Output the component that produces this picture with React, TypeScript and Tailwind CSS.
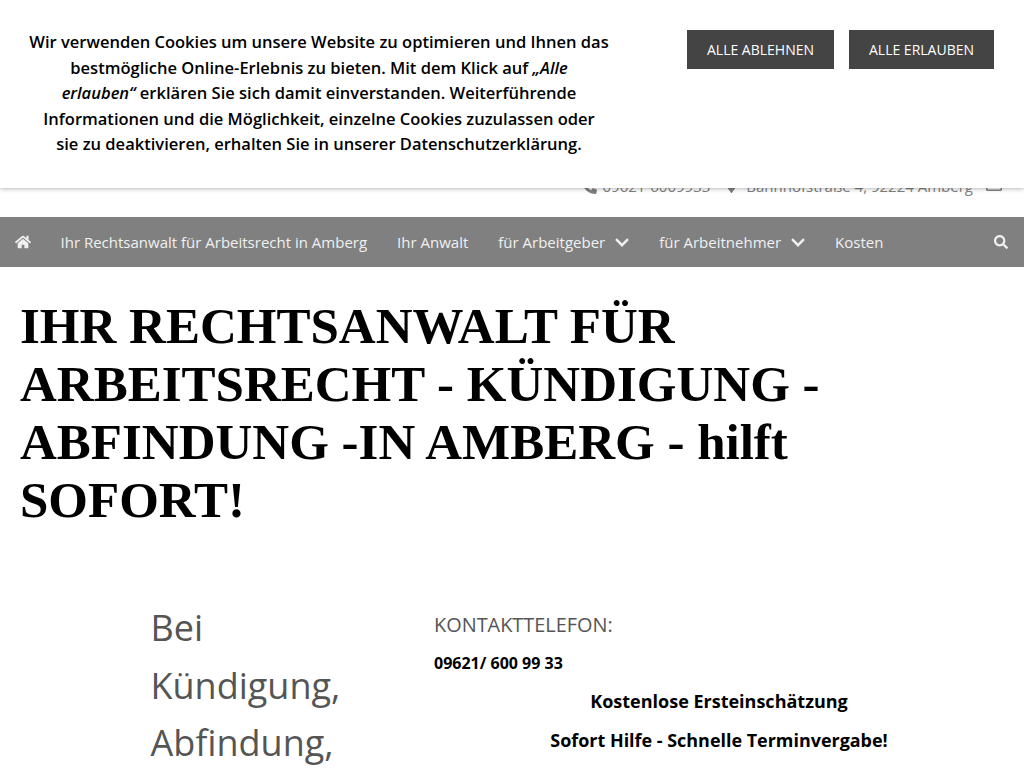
import { FaHome, FaMapMarker, FaPhoneAlt, FaRegEnvelope, FaSearch } from "react-icons/fa";

const navItems = [
  { label: "Ihr Rechtsanwalt für Arbeitsrecht in Amberg" },
  { label: "Ihr Anwalt" },
  { label: "für Arbeitgeber", sub: true },
  { label: "für Arbeitnehmer", sub: true },
  { label: "Kosten" },
];

function Chevron() {
  return (
    <svg width="14" height="9" viewBox="0 0 14 9" fill="none" stroke="currentColor" strokeWidth="2.4">
      <path d="M1 1.2 7 7.2 13 1.2" />
    </svg>
  );
}

function CookieBanner() {
  return (
    <div className="absolute left-0 top-0 z-10 flex h-[188px] w-full bg-white shadow-[0_0_5px_rgba(0,0,0,0.4)]">
      <p className="ml-[19px] mt-[29px] w-[600px] text-center text-[16.53px] font-semibold leading-[25.5px] text-black">
        Wir verwenden Cookies um unsere Website zu optimieren und Ihnen das
        <br />
        bestmögliche Online-Erlebnis zu bieten. Mit dem Klick auf <em>„Alle</em>
        <br />
        <em>erlauben“</em> erklären Sie sich damit einverstanden. Weiterführende
        <br />
        Informationen und die Möglichkeit, einzelne Cookies zuzulassen oder
        <br />
        sie zu deaktivieren, erhalten Sie in unserer Datenschutzerklärung.
      </p>
      <div className="ml-[68px] mt-[30px] flex gap-[15px]">
        <button className="h-[39px] w-[147px] bg-[#444444] text-[14px] text-white">ALLE ABLEHNEN</button>
        <button className="h-[39px] w-[145px] bg-[#444444] text-[14px] text-white">ALLE ERLAUBEN</button>
      </div>
    </div>
  );
}

export default function App() {
  return (
    <div className="relative h-[768px] w-[1024px] overflow-hidden bg-white font-['Open_Sans',sans-serif]">
      <CookieBanner />

      <div className="flex h-[217px] items-start justify-end pr-[22px] pt-[176px] text-[15px] leading-[20px] text-[#808080]">
        <span className="flex items-center gap-[6px]">
          <FaPhoneAlt size={15} className="-ml-[2px]" />
          09621-6009933
        </span>
        <span className="ml-[15px] flex items-center gap-[8px]">
          <FaMapMarker size={13} />
          Bahnhofstraße 4, 92224 Amberg
        </span>
        <FaRegEnvelope size={16} className="ml-[13px] mt-[1px]" />
      </div>

      <nav className="flex h-[50px] items-center bg-[#808080] text-[15px] text-[#f0f0f0]">
        <FaHome size={16} className="ml-[15px] mr-[29.5px]" />
        <div className="flex items-center gap-[30px]">
          {navItems.map((item) => (
            <span key={item.label} className="flex items-center gap-[10px]">
              {item.label}
              {item.sub && <Chevron />}
            </span>
          ))}
        </div>
        <FaSearch size={14} className="ml-auto mr-[16px]" />
      </nav>

      <h1 className="mx-[20px] mt-[30px] font-['Liberation_Serif',serif] text-[51px] font-bold leading-[58px] text-black">
        IHR RECHTSANWALT FÜR ARBEITSRECHT - KÜNDIGUNG - ABFINDUNG -IN AMBERG - hilft SOFORT!
      </h1>

      <div className="mt-[70px] flex pl-[150.5px]">
        <div className="w-[283.5px] text-[36px] leading-[57.6px] text-[#555555]">
          <p>Bei</p>
          <p>Kündigung,</p>
          <p>Abfindung,</p>
        </div>
        <div className="w-[570px] pt-[12px] text-[16px] font-bold text-black">
          <p className="text-[19.9px] font-normal leading-[28px] text-[#555555]">KONTAKTTELEFON:</p>
          <p className="mt-[12px] leading-[24px]">09621/ 600 99 33</p>
          <p className="mt-[13px] text-center text-[18px] leading-[26px]">Kostenlose Ersteinschätzung</p>
          <p className="mt-[13px] text-center text-[17.95px] leading-[26px]">Sofort Hilfe - Schnelle Terminvergabe!</p>
        </div>
      </div>
    </div>
  );
}
